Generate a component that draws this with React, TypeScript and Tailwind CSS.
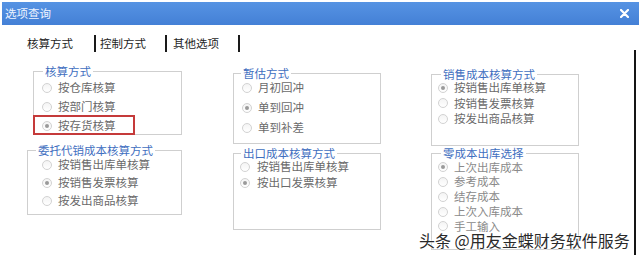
import React from "react";

type Opt = { label: string; checked?: boolean };

function Radio({ checked }: { checked?: boolean }) {
  return (
    <span className="w-[10px] h-[10px] rounded-full border border-[#d2d2d2] bg-gradient-to-b from-[#f4f4f4] to-white flex items-center justify-center shrink-0">
      {checked && <span className="w-[4px] h-[4px] rounded-full bg-[#9a9a9a]" />}
    </span>
  );
}

function Group({
  title,
  opts,
  className,
  legendClass,
  listClass,
  rowClass,
  color = "text-[#6a6a6a]",
}: {
  title: string;
  opts: Opt[];
  className: string;
  legendClass: string;
  listClass: string;
  rowClass: string;
  color?: string;
}) {
  return (
    <fieldset className={"border border-[#cfcfcf] p-0 m-0 " + className}>
      <legend className={"px-[2px] text-[11.5px] leading-[12px] text-[#3f6fbf] " + legendClass}>{title}</legend>
      <div className={"flex flex-col " + listClass}>
        {opts.map((o) => (
          <div key={o.label} className={"flex items-center gap-[6px] " + rowClass}>
            <Radio checked={o.checked} />
            <span className={"text-[11.5px] leading-none whitespace-nowrap " + color}>{o.label}</span>
          </div>
        ))}
      </div>
    </fieldset>
  );
}

export default function App() {
  return (
    <div
      className="relative w-[640px] h-[255px] bg-white overflow-hidden"
      style={{ fontFamily: '"Noto Sans CJK SC", "Noto Sans", sans-serif' }}
    >
      {/* title bar */}
      <div className="ml-[2px] mr-[1px] pt-[2px]">
        <div className="h-[23px] bg-gradient-to-b from-[#5693e3] to-[#4480d6] flex items-center justify-between pl-[3px] pr-[10px]">
          <span className="text-[11.5px] text-[#eef4ff] leading-none">选项查询</span>
          <svg width="9" height="9" viewBox="0 0 9 9">
            <path d="M1 1 L8 8 M8 1 L1 8" stroke="#ffffff" strokeWidth="2.2" strokeLinecap="round" />
          </svg>
        </div>
      </div>

      {/* body */}
      <div className="flex w-[640px]">
        <div className="w-[634px]">
          {/* tabs */}
          <div className="pt-[10px] flex items-center h-[27px] text-[11.5px] text-[#1e1e1e]">
            <span className="ml-[27px] w-[67px] leading-none">核算方式</span>
            <span className="w-[2px] h-[17px] bg-[#1a1a1a]" />
            <span className="ml-[4px] w-[65px] leading-none">控制方式</span>
            <span className="w-[2px] h-[17px] bg-[#1a1a1a]" />
            <span className="ml-[6px] w-[65px] leading-none">其他选项</span>
            <span className="w-[2px] h-[17px] bg-[#1a1a1a]" />
          </div>

          {/* columns */}
          <div className="flex">
            <div className="w-[182px] flex flex-col items-end">
              <Group
                title="核算方式"
                className="mt-[13px] w-[149px] h-[70px] pl-[8px]"
                legendClass="ml-[1px]"
                listClass="mt-[1px]"
                rowClass="h-[19px]"
                opts={[{ label: "按仓库核算" }, { label: "按部门核算" }, { label: "按存货核算", checked: true }]}
              />
              <Group
                title="委托代销成本核算方式"
                className="mt-[9px] w-[155px] h-[71px] pl-[14px]"
                legendClass="-ml-[6px]"
                listClass="mt-0"
                rowClass="h-[18px]"
                opts={[{ label: "按销售出库单核算" }, { label: "按销售发票核算", checked: true }, { label: "按发出商品核算" }]}
              />
            </div>
            <div className="ml-[51px] w-[148px] flex flex-col">
              <Group
                title="暂估方式"
                className="mt-[15px] w-[148px] h-[77px] pl-[8px]"
                legendClass="-ml-[1px]"
                listClass="-mt-[1px]"
                rowClass="h-[20px]"
                opts={[{ label: "月初回冲" }, { label: "单到回冲", checked: true }, { label: "单到补差" }]}
              />
              <Group
                title="出口成本核算方式"
                className="mt-[3px] w-[148px] h-[83px] pl-[6px]"
                legendClass="ml-[1px]"
                listClass="mt-0"
                rowClass="h-[16px] gap-[7px]"
                opts={[{ label: "按销售出库单核算" }, { label: "按出口发票核算", checked: true }]}
              />
            </div>
            <div className="ml-[50px] w-[148px] flex flex-col">
              <Group
                title="销售成本核算方式"
                className="mt-[16px] w-[148px] h-[78px] pl-[6px]"
                legendClass="ml-[3px]"
                listClass="mt-0"
                rowClass="h-[15.5px]"
                opts={[{ label: "按销售出库单核算", checked: true }, { label: "按销售发票核算" }, { label: "按发出商品核算" }]}
              />
              <Group
                title="零成本出库选择"
                className="mt-[1px] w-[148px] h-[103px] pl-[6px]"
                legendClass="ml-[3px]"
                listClass="mt-[1px]"
                rowClass="h-[14.75px]"
                color="text-[#8a8a8a]"
                opts={[
                  { label: "上次出库成本", checked: true },
                  { label: "参考成本" },
                  { label: "结存成本" },
                  { label: "上次入库成本" },
                  { label: "手工输入" },
                ]}
              />
            </div>
          </div>
        </div>
        <div className="w-[2px] mt-[25px] h-[210px] bg-[#151515]" />
      </div>

      {/* annotation */}
      <div className="absolute left-[33px] top-[115px] w-[102px] h-[20px] border-2 border-[#c53a3a]" />

      {/* watermark */}
      <div className="absolute left-[419px] top-[230px] text-[16px] leading-[20px] text-[#2a2a2a] whitespace-nowrap [text-shadow:0_0_2px_#fff,0_0_2px_#fff,0_0_1px_#fff]">
        头条 @用友金蝶财务软件服务
      </div>
    </div>
  );
}
